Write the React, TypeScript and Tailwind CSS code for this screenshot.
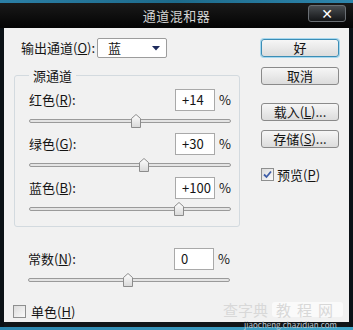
import React from 'react';

const FONT = '"Noto Sans CJK SC", "Liberation Sans", sans-serif';

// slider maps -200..+200 onto the track
const Slider: React.FC<{ value: number }> = ({ value }) => {
  const left = ((value + 200) / 400) * 200 - 5;
  return (
    <div className="relative h-[14px] w-[202px]">
      <div className="absolute left-0 right-0 top-[5px] h-[4px] rounded-[2px] border border-[#9a9a9a] bg-[#e4e4e4]" />
      <svg
        className="absolute top-0"
        style={{ left }}
        width="10"
        height="14"
        viewBox="0 0 10 14"
      >
        <defs>
          <linearGradient id="thumbG" x1="0" y1="0" x2="0" y2="1">
            <stop offset="0" stopColor="#ffffff" />
            <stop offset="1" stopColor="#d8d8d8" />
          </linearGradient>
        </defs>
        <path d="M0.5 4.5 L5 0.5 L9.5 4.5 V13.5 H0.5 Z" fill="url(#thumbG)" stroke="#8c8c8c" />
      </svg>
    </div>
  );
};

const ValueRow: React.FC<{ label: string; mn: string; value: string; slider: number }> = ({
  label,
  mn,
  value,
  slider,
}) => (
  <div className="flex flex-col">
    <div className="flex h-[22px] items-center">
      <div className="w-[146px] text-[13px]">
        {label}(<u>{mn}</u>):
      </div>
      <div className="flex h-[22px] w-[40px] items-center border border-[#a9a9a9] bg-white pl-[6px] text-[13px]">
        {value}
      </div>
      <div className="ml-[4px] text-[13px]">%</div>
    </div>
    <div className="mt-[3px]">
      <Slider value={slider} />
    </div>
  </div>
);

const Button: React.FC<{ children: React.ReactNode; primary?: boolean; className?: string }> = ({
  children,
  primary,
  className,
}) => (
  <div
    className={`flex h-[18px] w-[78px] items-center justify-center rounded-[3px] border bg-gradient-to-b from-[#f6f6f6] to-[#dcdcdc] text-[13px] ${
      primary ? 'border-[#3c8db5] shadow-[0_0_0_1px_#a6d8ef]' : 'border-[#8a8a8a]'
    } ${className ?? ''}`}
  >
    {children}
  </div>
);

const CheckBox: React.FC<{ checked?: boolean }> = ({ checked }) => (
  <div className="flex h-[13px] w-[13px] items-center justify-center border border-[#8e8f8f] bg-gradient-to-br from-[#dcdcdc] to-[#fafafa]">
    {checked && (
      <svg width="9" height="9" viewBox="0 0 9 9">
        <path d="M1 4.5 L3.5 7 L8 1.5" fill="none" stroke="#3f5ea8" strokeWidth="1.8" />
      </svg>
    )}
  </div>
);

export default function App() {
  return (
    <div
      className="relative flex h-[330px] w-[353px] flex-col overflow-hidden bg-[#0b1116] text-[#141414]"
      style={{ fontFamily: FONT }}
    >
      <div className="h-[3px] bg-gradient-to-r from-[#2b7fa6] via-[#1d6b8c] to-[#2e86ad]" />
      {/* title bar */}
      <div className="relative flex h-[25px] items-center justify-center bg-gradient-to-b from-[#1a1a1a] to-[#050505]">
        <span className="text-[13px] tracking-[0.5px] text-[#d4d4d4]">通道混和器</span>
        <div className="absolute right-[7px] top-[2px] flex h-[17px] w-[38px] items-center justify-center rounded-[3px] border border-[#6a6f74] bg-gradient-to-b from-[#4a4e52] to-[#141618]">
          <span className="text-[14px] font-bold leading-none text-white" style={{ fontFamily: '"DejaVu Sans", sans-serif' }}>
            ✕
          </span>
        </div>
      </div>

      {/* client */}
      <div className="mx-[4px] flex h-[294px] bg-[#f1f1f1]">
        {/* left column */}
        <div className="flex w-[246px] flex-col">
          <div className="ml-[17px] mt-[10px] flex h-[20px] items-center">
            <span className="w-[76px] text-[13px]">
              输出通道(<u>O</u>):
            </span>
            <div className="flex h-[20px] w-[70px] items-center justify-between rounded-[2px] border border-[#9c9c9c] bg-white pl-[10px] pr-[6px] text-[13px]">
              <span>蓝</span>
              <svg width="8" height="6" viewBox="0 0 8 6">
                <path d="M0 1 H8 L4 5.5 Z" fill="#1d2a5c" />
              </svg>
            </div>
          </div>

          <div className="relative ml-[10px] mt-[17px] flex w-[226px] flex-col gap-[5px] rounded-[3px] border border-[#d3dadf] pb-[10px] pl-[14px] pt-[13px]">
            <span className="absolute -top-[10px] left-[14px] bg-[#f1f1f1] px-[4px] text-[13px]">源通道</span>
            <ValueRow label="红色" mn="R" value="+14" slider={14} />
            <ValueRow label="绿色" mn="G" value="+30" slider={30} />
            <ValueRow label="蓝色" mn="B" value="+100" slider={100} />
          </div>

          <div className="ml-[24px] mt-[21px]">
            <ValueRow label="常数" mn="N" value="0" slider={0} />
          </div>

          <div className="ml-[9px] mt-[15px] flex items-center gap-[5px]">
            <CheckBox />
            <span className="text-[13px]">
              单色(<u>H</u>)
            </span>
          </div>
        </div>

        {/* right column */}
        <div className="ml-[11px] flex flex-col">
          <Button primary className="mt-[11px]">
            好
          </Button>
          <Button className="mt-[10px]">取消</Button>
          <Button className="mt-[18px]">
            载入(<u>L</u>)...
          </Button>
          <Button className="mt-[9px]">
            存储(<u>S</u>)...
          </Button>
          <div className="mt-[17px] flex items-center gap-[3px]">
            <CheckBox checked />
            <span className="text-[13px]">
              预览(<u>P</u>)
            </span>
          </div>
        </div>
      </div>
      <div className="mx-[4px] h-[5px] bg-[#111518]" />
      <div className="h-[3px] bg-gradient-to-r from-[#2b85ad] to-[#42a6c9]" />

      {/* watermark */}
      <div className="pointer-events-none absolute right-[10px] top-[302px] flex items-center gap-[4px] text-[15px] leading-none text-[#d8d8d8]">
        <span>查字典</span>
        <span className="rounded-[3px] bg-[#fafafa] px-[4px] tracking-[6px]">教程网</span>
      </div>
      <div className="pointer-events-none absolute right-[16px] top-[321px] text-[8px] leading-none text-[#b9c4cc]">
        jiaocheng.chazidian.com
      </div>
    </div>
  );
}
